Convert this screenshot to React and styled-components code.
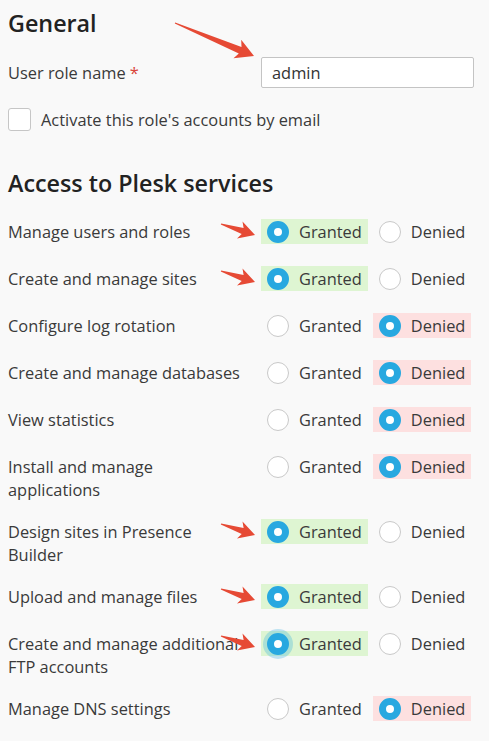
import React from 'react';
import styled, { createGlobalStyle, css } from 'styled-components';

const GlobalStyle = createGlobalStyle`
  html, body {
    margin: 0;
    padding: 0;
    background: #f9f9f9;
  }
  body {
    font-family: "Open Sans", "Liberation Sans", sans-serif;
    font-size: 16.4px;
    color: #3a3a3a;
  }
`;

const Page = styled.div`
  padding: 9px 8px 20px 8px;
  width: 489px;
  box-sizing: border-box;
`;

const Heading = styled.h2`
  margin: ${(p) => p.$top || 0}px 0 0 0;
  font-size: 23.3px;
  line-height: 28px;
  font-weight: 600;
  color: #222;
`;

const FieldRow = styled.div`
  display: grid;
  grid-template-columns: 253px 213px;
  align-items: center;
  margin-top: 20px;
`;

const Label = styled.div`
  line-height: 23px;
  color: #3a3a3a;
`;

const Required = styled.span`
  color: #d9443b;
  margin-left: 4px;
`;

const InputWrap = styled.div`
  position: relative;
`;

const TextInput = styled.input`
  box-sizing: border-box;
  width: 213px;
  height: 31px;
  border: 1px solid #c4c4c4;
  border-radius: 2px;
  background: #fff;
  padding: 0 10px;
  font-family: inherit;
  font-size: 16.4px;
  color: #333;
  outline: none;
`;

const CheckRow = styled.label`
  display: flex;
  align-items: center;
  gap: 10px;
  margin-top: 20px;
  height: 23px;
`;

const CheckBox = styled.span`
  box-sizing: border-box;
  width: 23px;
  height: 23px;
  border: 1px solid #c6c6c6;
  border-radius: 3px;
  background: #fff;
`;

const ServiceList = styled.div`
  display: flex;
  flex-direction: column;
  gap: 17px;
  margin-top: 21px;
`;

const ServiceRow = styled.div`
  display: grid;
  grid-template-columns: 253px auto;
  align-items: start;
`;

const ServiceLabel = styled(Label)`
  padding-top: 2px;
  padding-right: 17px;
`;

const OptionGroup = styled.div`
  position: relative;
  display: flex;
  align-items: flex-start;
  gap: 5px;
  height: 30px;
  padding-top: 1px;
  box-sizing: border-box;
`;

const Option = styled.span`
  display: inline-flex;
  align-items: center;
  gap: 10px;
  height: 25px;
  padding: 0 6px;
  line-height: 25px;
  color: #3a3a3a;
  background: ${(p) =>
    !p.$checked ? 'transparent' : p.$kind === 'granted' ? '#def5d2' : '#fde0e0'};
`;

const Radio = styled.span`
  box-sizing: border-box;
  width: 22px;
  height: 22px;
  border-radius: 50%;
  flex: none;
  ${(p) =>
    p.$checked
      ? css`
          background: #fff;
          border: 7px solid #28a8e0;
        `
      : css`
          background: #fff;
          border: 1.5px solid #c9c9c9;
        `}
  ${(p) =>
    p.$focus &&
    css`
      box-shadow: 0 0 0 4px rgba(40, 168, 224, 0.28);
    `}
`;

const ArrowSvg = styled.svg`
  position: absolute;
  left: ${(p) => p.$left}px;
  top: ${(p) => p.$top}px;
  overflow: visible;
  pointer-events: none;
`;

function arrowPoints(x1, y1, x2, y2, head, hw, sw) {
  const dx = x2 - x1;
  const dy = y2 - y1;
  const len = Math.hypot(dx, dy);
  const ux = dx / len;
  const uy = dy / len;
  const nx = -uy;
  const ny = ux;
  const bx = x2 - ux * head;
  const by = y2 - uy * head;
  const barbX = x2 - ux * (head + 3);
  const barbY = y2 - uy * (head + 3);
  const pts = [
    [x1 + nx * 0.6, y1 + ny * 0.6],
    [bx + nx * sw, by + ny * sw],
    [barbX + nx * hw, barbY + ny * hw],
    [x2, y2],
    [barbX - nx * hw, barbY - ny * hw],
    [bx - nx * sw, by - ny * sw],
    [x1 - nx * 0.6, y1 - ny * 0.6],
  ];
  return pts.map((p) => p.map((v) => v.toFixed(1)).join(',')).join(' ');
}

const Arrow = ({ left, top, w, h, x1, y1, x2, y2, head = 13, hw = 9, sw = 3 }) => (
  <ArrowSvg $left={left} $top={top} width={w} height={h} viewBox={`0 0 ${w} ${h}`}>
    <polygon points={arrowPoints(x1, y1, x2, y2, head, hw, sw)} fill="#e64a35" />
  </ArrowSvg>
);

const services = [
  { label: 'Manage users and roles', granted: true, arrow: true },
  { label: 'Create and manage sites', granted: true, arrow: true },
  { label: 'Configure log rotation', granted: false },
  { label: 'Create and manage databases', granted: false },
  { label: 'View statistics', granted: false },
  { label: 'Install and manage applications', granted: false },
  { label: 'Design sites in Presence Builder', granted: true, arrow: true },
  { label: 'Upload and manage files', granted: true, arrow: true },
  { label: 'Create and manage additional FTP accounts', granted: true, arrow: true, focus: true },
  { label: 'Manage DNS settings', granted: false },
];

const Service = ({ label, granted, arrow, focus }) => (
  <ServiceRow>
    <ServiceLabel>{label}</ServiceLabel>
    <OptionGroup>
      {arrow && <Arrow left={-42} top={-2} w={44} h={30} x1={2} y1={8} x2={36} y2={19} />}
      <Option $checked={granted} $kind="granted">
        <Radio $checked={granted} $focus={focus} />
        Granted
      </Option>
      <Option $checked={!granted} $kind="denied">
        <Radio $checked={!granted} />
        Denied
      </Option>
    </OptionGroup>
  </ServiceRow>
);

const App = () => (
  <Page>
    <GlobalStyle />
    <Heading>General</Heading>
    <FieldRow>
      <Label>
        User role name<Required>*</Required>
      </Label>
      <InputWrap>
        <Arrow left={-90} top={-40} w={90} h={50} x1={4} y1={6} x2={83} y2={39} head={15} hw={10} sw={3.5} />
        <TextInput defaultValue="admin" />
      </InputWrap>
    </FieldRow>
    <CheckRow>
      <CheckBox />
      Activate this role's accounts by email
    </CheckRow>
    <Heading $top={38}>Access to Plesk services</Heading>
    <ServiceList>
      {services.map((s) => (
        <Service key={s.label} {...s} />
      ))}
    </ServiceList>
  </Page>
);

export default App;
